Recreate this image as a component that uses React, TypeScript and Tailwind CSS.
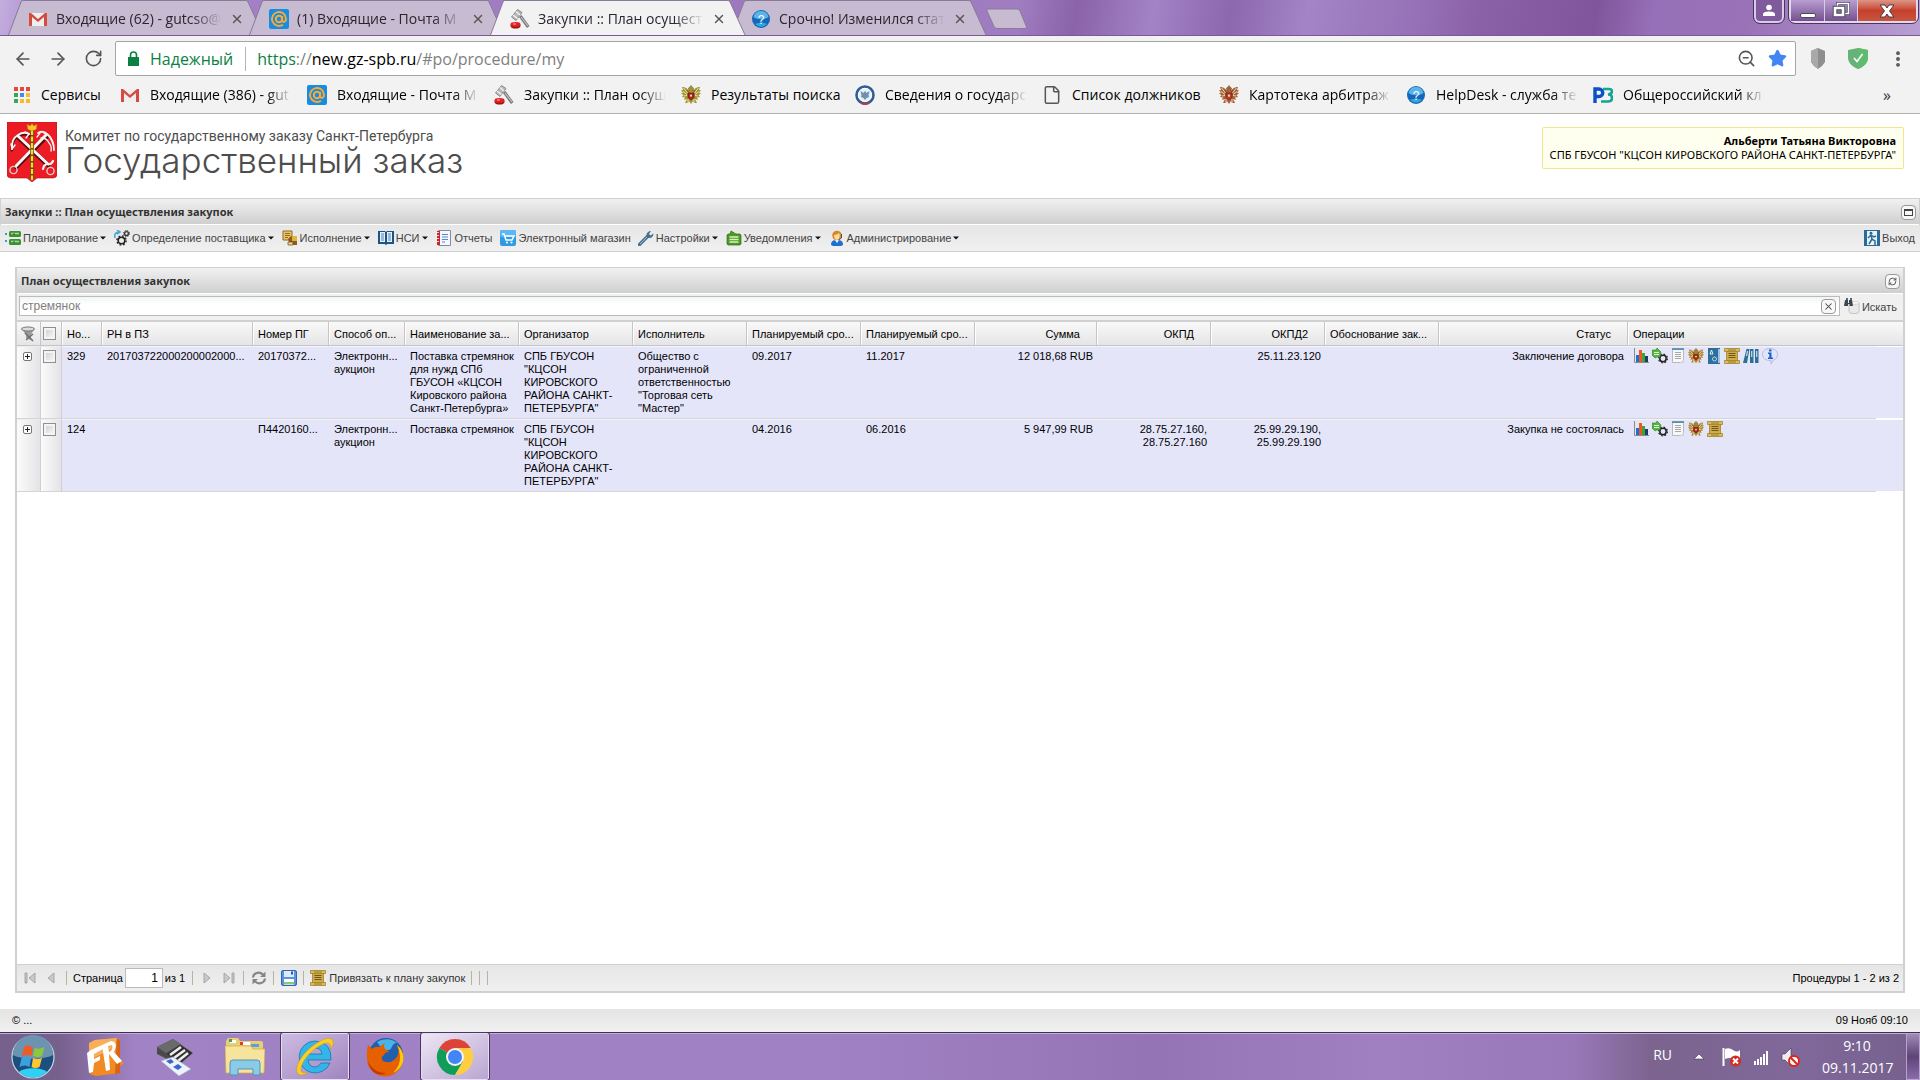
import type { ReactNode } from "react";
import clsx from "clsx";
import {
  ArrowLeft,
  ArrowRight,
  EllipsisVertical,
  File,
  RefreshCw,
  RotateCw,
  Star,
  X,
  ZoomOut,
} from "lucide-react";

const ui = "font-['Open_Sans','Noto_Sans',sans-serif]";
const arial = "font-['Liberation_Sans',Arial,sans-serif]";
const tahoma = "font-['Noto_Sans','Open_Sans',sans-serif]";
const fade = "[mask-image:linear-gradient(to_right,#000_82%,transparent)]";

/* ---------- icons ---------- */

const Svg = ({
  size = 16,
  box = 16,
  narrow = false,
  children,
}: {
  size?: number;
  box?: number;
  narrow?: boolean;
  children: ReactNode;
}) => (
  <svg
    width={narrow ? size - 2 : size}
    height={size}
    viewBox={`0 0 ${narrow ? box - 2 : box} ${box}`}
    className="shrink-0"
    aria-hidden="true"
  >
    {children}
  </svg>
);

const GmailIcon = () => (
  <Svg size={20} box={20}>
    <path d="M2 4h16v13H2z" fill="#eee" />
    <path d="M1 17V4h2l7 6 7-6h2v13h-3V8l-6 5-6-5v9z" fill="#d54b3d" />
  </Svg>
);

const MailRuIcon = () => (
  <Svg size={20} box={20}>
    <rect width="20" height="20" rx="2" fill="#168de2" />
    <circle cx="10" cy="10" r="3.2" fill="none" stroke="#ffa930" strokeWidth="2" />
    <path
      d="M13.2 7v4.2c0 2.6 3.8 2.2 3.8-1.2a7 7 0 1 0-3 5.7"
      fill="none"
      stroke="#ffa930"
      strokeWidth="1.9"
    />
  </Svg>
);

const GavelIcon = () => (
  <Svg size={20} box={20}>
    <path d="M9 8l2.500-2 8 11-2.500 2z" fill="#777" />
    <path d="M11 8l7 9" stroke="#c4c4c4" strokeWidth="1.2" />
    <path d="M1.500 8l6-7.500 4.500 3-6 8z" fill="#b9b9b9" stroke="#777" strokeWidth=".8" />
    <path d="M3 6l4.500 3.500M6 2.500l4 3.500" stroke="#f4f4f4" strokeWidth="1.2" />
    <ellipse cx="5.500" cy="16.800" rx="5" ry="2.800" fill="#a80f0f" />
    <ellipse cx="5.500" cy="15.400" rx="5" ry="2.400" fill="#e02222" />
    <ellipse cx="4.500" cy="15" rx="1.700" ry=".8" fill="#ff9b9b" />
  </Svg>
);

const HelpIcon = () => (
  <Svg size={20} box={20}>
    <circle cx="10" cy="10" r="9" fill="#1667b7" />
    <path d="M2.5 8a7.7 7.7 0 0 1 15 0c-4 3-11 3-15 0z" fill="#59b4ea" />
    <path d="M4 15a8 8 0 0 0 12 0c-4-2-8-2-12 0z" fill="#31a5e0" />
    <text x="10" y="14.6" fontSize="12" fontWeight="400" textAnchor="middle" fill="#fff" fontFamily="Liberation Sans">
      ?
    </text>
  </Svg>
);

const EagleIcon = ({ size = 20, wing = "#a8922f", body = "#b3211f" }) => (
  <Svg size={size} box={20}>
    <path
      d="M9 8C7 4 5 2 1 2l1 3-2 .5 2 2-2 1 2.500 1.500L1 12l3 .5L3 15l3-1-2 4h3l1-2 2 3 2-3 1 2h3l-2-4 3 1-1-2.500 3-.5-1.500-2L20 8.500l-2-1 2-2L18 5l1-3c-4 0-6 2-8 6z"
      fill={wing}
    />
    <path d="M6 5.500l2 .5-.5-3L9 2l1-1.500L11 2l1.500 1-.5 3 2-.5-2.500 3h-3z" fill={wing} stroke="#5c4412" strokeWidth=".5" />
    <path d="M2.500 3l4 5M2 6.500l4 3M3 11l3-.5M17.500 3l-4 5M18 6.500l-4 3M17 11l-3-.5M7 14v4M13 14v4" stroke="#f0e6b8" strokeWidth=".9" />
    <path d="M7 8h6v4.500L10 15l-3-2.500z" fill={body} stroke="#5c1a10" strokeWidth=".6" />
    <circle cx="10" cy="10.700" r="1.100" fill="#f3e4c4" />
  </Svg>
);

const ServiceIcon = () => (
  <Svg size={20} box={20}>
    <circle cx="10" cy="10" r="8.500" fill="#e8edf3" stroke="#2d5f99" strokeWidth="2.600" />
    <circle cx="10" cy="10" r="6.500" fill="none" stroke="#fff" strokeWidth="1" />
    <path d="M10 6l1.500 2 3-2-1 4 .5 2-2.500 1-1.500 2-1.500-2L6 12l.5-2-1-4 3 2z" fill="#6f8fb3" />
    <path d="M6 18c2 1.500 6 1.500 8 0" stroke="#c33" strokeWidth="1.600" fill="none" />
  </Svg>
);

const AppsIcon = () => (
  <Svg size={17} box={17}>
    {["#e8453c", "#e8453c", "#e8453c", "#3aa757", "#4688f1", "#f9bb2d", "#3aa757", "#f9bb2d", "#f9bb2d"].map(
      (c, i) => (
        <rect key={i} x={(i % 3) * 6} y={Math.floor(i / 3) * 6} width="4" height="4" fill={c} />
      )
    )}
  </Svg>
);

const RzIcon = () => (
  <Svg size={20} box={20}>
    <path d="M2 18V4h4a3.500 3.500 0 0 1 0 7.500H3" fill="none" stroke="#0a50c8" strokeWidth="3.400" />
    <path d="M10 4h6q3 0 3 2.500T15 9.500q4 0 4 3.500t-4 3.500H8" fill="none" stroke="#12a594" strokeWidth="2.600" />
  </Svg>
);

const PlanIcon = () => (
  <Svg>
    <path d="M0 3h2v2H0zM0 10h2v2H0zM3 3h1M3 11h1" fill="#2b9fd0" />
    <rect x="4" y="1" width="12" height="6" rx="1.500" fill="#3f8f34" />
    <rect x="4" y="9" width="12" height="6" rx="1.500" fill="#3f8f34" />
    <path d="M6 3.500h8M6 11.500h8" stroke="#a5dc93" strokeWidth="1.600" />
    <path d="M8 4h2M8 12h2" stroke="#2c5e26" />
  </Svg>
);

const GearsIcon = () => (
  <Svg>
    <path d="M1 8C0 4 2 2 5 2M3 0l3 2-3 2" stroke="#4aa7d6" strokeWidth="1.600" fill="none" />
    <circle cx="7.500" cy="10.500" r="3.300" fill="none" stroke="#222" strokeWidth="1.600" />
    <circle cx="7.500" cy="10.500" r="4.600" fill="none" stroke="#222" strokeWidth="1.400" strokeDasharray="1.800 1.810" />
    <circle cx="12.500" cy="3.500" r="1.900" fill="none" stroke="#333" strokeWidth="1.300" />
    <circle cx="12.500" cy="3.500" r="3" fill="none" stroke="#333" strokeDasharray="1.300 1.050" />
  </Svg>
);

const ExecIcon = () => (
  <Svg>
    <path d="M1 1h9v9H1z" fill="#e9c66a" stroke="#8d6a1d" />
    <path d="M3 3.500h5M3 5.500h5M3 7.500h3" stroke="#8d6a1d" />
    <path d="M6 9l3-3 6 2v7H8z" fill="#8e5a26" />
    <path d="M10 6h5v5h-5z" fill="#e2b33d" />
    <path d="M6 12h5v3H6z" fill="#f0d489" stroke="#6b4a13" strokeWidth=".7" />
  </Svg>
);

const BookIcon = () => (
  <Svg>
    <path d="M0 1h7l1 1 1-1h7v13H9l-1 1.500L7 14H0z" fill="#1b5486" />
    <path d="M2 2h5v10H2zM9 2h5v10H9z" fill="#e8f1f9" />
    <path d="M3 4h3M3 6h3M3 8h3M3 10h3M10 4h3M10 6h3M10 8h3M10 10h3" stroke="#4b83b5" />
  </Svg>
);

const ReportIcon = () => (
  <Svg>
    <path d="M2.500.5h12v15h-12z" fill="#f4f7fc" stroke="#7c8ea5" />
    <path d="M1 1h3v14H1z" fill="#c9252b" />
    <path d="M0 2.500h3M0 5.500h3M0 8.500h3M0 11.500h3" stroke="#fff" strokeWidth=".8" />
    <path d="M6 4.500h6M6 7h6M6 9.500h6M6 12h3" stroke="#5d86c4" />
  </Svg>
);

const CartIcon = () => (
  <Svg>
    <rect width="16" height="16" rx="2" fill="#2f9be4" />
    <rect width="16" height="7" rx="2" fill="#5cb8f2" />
    <path d="M2 4h2l2 6h6l2-4H5" fill="none" stroke="#fff" strokeWidth="1.500" />
    <circle cx="7" cy="12.500" r="1.100" fill="#fff" />
    <circle cx="11.500" cy="12.500" r="1.100" fill="#fff" />
  </Svg>
);

const WrenchIcon = () => (
  <Svg>
    <path d="M1.500 14.500L10 6" stroke="#47708f" strokeWidth="3.200" strokeLinecap="round" />
    <path d="M2 14L9 7" stroke="#9dbdd4" strokeWidth="1" />
    <path d="M8.500 5.500c0-3 2-4.500 4.500-4.500L11 4l1.500 1.500 3-2c0 3-2 5-5 4.500z" fill="#47708f" />
  </Svg>
);

const NoticeIcon = () => (
  <Svg>
    <path d="M4 4l1-3 5 3h4l1 1v9l-1 1H2l-1-1V5l1-1z" fill="#4d9b22" stroke="#2f6b12" strokeWidth=".7" />
    <path d="M3.500 7h9M3.500 9.500h9M3.500 12h9" stroke="#d9f2c4" strokeWidth="1.300" />
  </Svg>
);

const AdminIcon = () => (
  <Svg>
    <path d="M2 15c0-4 2-5 6-5s6 1 6 5l-2 1H4z" fill="#1f6fd0" />
    <path d="M6 10l2 3 2-3z" fill="#fff" />
    <circle cx="8" cy="5.500" r="4.800" fill="#d18a25" />
    <path d="M5 5c2 0 4-1 5-2 1 1 1.500 6-2 7-2 0-3-3-3-5z" fill="#fbd9a9" />
    <path d="M12.500 4v4l-3 2" stroke="#555" fill="none" />
  </Svg>
);

const ExitIcon = () => (
  <Svg>
    <path d="M0 0h16v16H0z" fill="#2b6a94" />
    <path d="M3 1h10v14H3z" fill="#e8f1f7" />
    <circle cx="7" cy="3.200" r="1.400" fill="#2b6a94" />
    <path d="M7 5l1 4 3 2v4M8 9l-3 5M4 8l3-3 3 2 2-1" stroke="#2b6a94" strokeWidth="1.500" fill="none" />
  </Svg>
);

const FilterIcon = () => (
  <Svg>
    <path d="M1.500 3h13L11 8.500V14l-3-1-2-1V8.500z" fill="#9a9a9a" />
    <ellipse cx="8" cy="3" rx="6.500" ry="2" fill="#dcdcdc" stroke="#777" />
    <path d="M5 7l8 8M13 8l-7 6" stroke="#707070" strokeWidth="1.600" />
  </Svg>
);

const ChartIcon = () => (
  <Svg>
    <path d="M1.500 0v14.500H16" stroke="#8a8a8a" fill="none" />
    <path d="M3 7h3v7H3z" fill="#1672d8" />
    <path d="M6 2h3v12H6z" fill="#f0561d" />
    <path d="M9 5h3v9H9z" fill="#3da33a" />
    <path d="M12 8h3v6h-3z" fill="#1d3d66" />
  </Svg>
);

const ProcessIcon = () => (
  <Svg>
    <circle cx="11" cy="10.500" r="3.200" fill="none" stroke="#222" strokeWidth="1.500" />
    <circle cx="11" cy="10.500" r="4.400" fill="none" stroke="#222" strokeWidth="1.200" strokeDasharray="1.700 1.755" />
    <path d="M0 2l4 0 1-2 4 4-1 5-3 0-2 1-3-3z" fill="#56b53f" stroke="#2f7d22" strokeWidth=".6" />
    <path d="M2 4.500h5M2 6.500h5" stroke="#dff5d8" />
  </Svg>
);

const PageIcon = () => (
  <Svg narrow>
    <path d="M1.500 1.500h11v13h-11z" fill="#f7f7f7" stroke="#b9b9b9" />
    <path d="M1 1h12" stroke="#3f7fa8" strokeWidth="1.500" />
    <path d="M4 4.500h6M4 6.500h6M4 8.500h6M4 10.500h6" stroke="#a9a9a9" />
    <path d="M9 15l4-4v4z" fill="#d5d5d5" />
  </Svg>
);

const LawIcon = () => (
  <Svg narrow>
    <path d="M1 0h12v16H1z" fill="#2d6e9c" />
    <path d="M11 1h2v14h-2z" fill="#9cc3de" />
    <path d="M3 6l1.500-4L6 6z" fill="none" stroke="#e1eef7" />
    <circle cx="7.500" cy="11" r="2" fill="none" stroke="#b5d4e8" />
  </Svg>
);

const ScrollIcon = () => (
  <Svg>
    <path d="M2.500 2h11v12h-11z" fill="#d0ac48" stroke="#8a6914" strokeWidth=".6" />
    <path d="M.5.500h15v3H.5zM.5 12.500h15v3H.5z" fill="#dcbc58" stroke="#9a7820" strokeWidth=".7" />
    <path d="M4.500 5.500h7M4.500 7.500h7M4.500 9.500h7" stroke="#6e5818" />
    <path d="M4 2h8M4 14h8" stroke="#87691d" strokeWidth=".8" />
  </Svg>
);

const BindersIcon = () => (
  <Svg>
    <path d="M3.500 1h3L4 15H0z" fill="#2f6f96" />
    <path d="M7 1h3.500v14H7zM12 1h3.500v14H12z" fill="#2f6f96" />
    <path d="M4.500 3l-1 5M8.700 3v6M13.700 3v6" stroke="#c7e0ef" strokeWidth="1.200" />
  </Svg>
);

const InfoIcon = () => (
  <Svg>
    <path d="M8 .5c4.500 0 7.500 2.500 7.500 6 0 3-1.500 4.500-4 5.500L9 16v-3.500C4 13 .5 10 .5 6.500c0-3.500 3-6 7.500-6z" fill="#dfe5fb" stroke="#a9b2d8" strokeWidth=".8" />
    <path d="M7 1.500h2.500v2H7zM6 4.500h3.500v5H11V11H6V9.500h1.300V6H6z" fill="#1c5fd1" />
  </Svg>
);

const SearchDbIcon = () => (
  <Svg>
    <path d="M5 5h10v9c0 2-10 2-10 0z" fill="#e9e9e9" stroke="#c4c4c4" />
    <ellipse cx="10" cy="5" rx="5" ry="1.500" fill="#fafafa" stroke="#c4c4c4" strokeWidth=".6" />
    <path d="M1 2h3v3h1V2h3l1 6H5.500V6H4v2H0z" fill="#3c4650" />
    <path d="M2 0h2v2H2zM6 0h2v2H6z" fill="#59646e" />
  </Svg>
);

const SaveIcon = () => (
  <Svg>
    <rect x=".5" y=".5" width="15" height="15" rx="1.500" fill="#5b93df" stroke="#3465b0" />
    <path d="M3 1h10v6H3z" fill="#dceafb" />
    <path d="M10 1.500h2v3h-2z" fill="#2a58a5" />
    <path d="M3 9h10v6H3z" fill="#fff" />
    <path d="M3 12h10v2.500H3z" fill="#8bc97a" />
  </Svg>
);

const RefreshIcon = () => (
  <Svg>
    <path
      d="M2 7.500C2.500 3 8 1 12 4.500M14 8.500C13.500 13 8 15 4 11.500"
      fill="none"
      stroke="#858585"
      strokeWidth="2.200"
    />
    <path d="M14.500 1.500V7H9zM1.500 14.500V9H7z" fill="#858585" />
  </Svg>
);

const Emblem = () => (
  <svg width="50" height="60" viewBox="0 0 50 60" className="shrink-0" role="img" aria-label="Герб">
    <path d="M0 0h50v52q0 4-4 4H30l-5 4-5-4H4q-4 0-4-4z" fill="#ed1c24" stroke="#a5161b" strokeWidth=".6" />
    <g fill="none" stroke="#5a0d10" strokeLinecap="round">
      <path d="M9 45L40 14M41 43L11 15" strokeWidth="4.600" />
      <path d="M5 28q-1-10 6-14 7-4 12 0" strokeWidth="3" />
    </g>
    <g fill="none" stroke="#f5f5f5" strokeLinecap="round">
      <path d="M9 44L39 13M41 42L11 14" strokeWidth="3" />
      <path d="M5 27q-1-10 6-14 6-4 11-1" strokeWidth="2" />
      <path d="M5 27l-1-5M5 27l3-4M22 12l-4-2M22 12l-3 4" strokeWidth="1.400" />
      <path d="M31 11q5-3 9 1 7 6 7 16" strokeWidth="1.800" />
      <path d="M34 16q6 0 8 5 3 3 2 8M33 11l-3 4M37 11q6 1 8 8" strokeWidth="1.300" />
      <path d="M37 44q3-3 4-2 3 1 5-3M37 44l-1 3" strokeWidth="2.200" />
    </g>
    <circle cx="6.500" cy="48" r="3.600" fill="none" stroke="#e5c9c9" strokeWidth="1.400" />
    <circle cx="43.500" cy="49" r="3.600" fill="none" stroke="#e5c9c9" strokeWidth="1.400" />
    <path d="M25 8v50" stroke="#6b4a08" strokeWidth="3.600" />
    <path d="M25 8v50" stroke="#f8d92f" strokeWidth="2.200" strokeDasharray="5 1.500" />
    <path d="M20 2l3 2 2-2.500L27 4l3-2-.5 5q-4.500 3.500-9 0z" fill="#f3c72b" stroke="#a1700c" strokeWidth=".5" />
  </svg>
);

const Caret = () => (
  <svg width="6" height="4" viewBox="0 0 6 4" aria-hidden="true">
    <path d="M0 .5h6L3 3.500z" fill="#111" />
  </svg>
);

/* ---------- browser window ---------- */

const Tab = ({ tab }: { tab: (typeof tabs)[number] }) => (
  <div className={clsx("relative -mr-[15px] h-[35px] w-64 shrink-0", tab.active && "z-10")}>
    <svg
      className="absolute inset-0 h-full w-full"
      viewBox="0 0 256 35"
      preserveAspectRatio="none"
      aria-hidden="true"
    >
      <path
        d="M.5 35L13 2q.5-1.500 2-1.500h223q1.500 0 2 1.500l15 33"
        fill={tab.active ? "#f2f2f2" : "#c6bbd0"}
        stroke="#8a7a99"
      />
    </svg>
    <div className="relative flex h-full items-center px-5 pt-0.5">
      {tab.icon}
      <a href="#tab" className={clsx("ml-2 flex-1 whitespace-nowrap text-sm text-[#2b2430]", fade)}>
        {tab.title}
      </a>
      <button type="button" aria-label="Закрыть вкладку" className="ml-2 text-[#555]">
        <X size={14} strokeWidth={2.4} />
      </button>
    </div>
  </div>
);

const WindowButtons = () => (
  <div className="ml-auto flex items-start pr-0.5">
    <button
      type="button"
      aria-label="Профиль"
      className="mr-[5px] flex h-[23px] w-[30px] items-center justify-center rounded-b-md border-2 border-t-0 border-[#d9cbe8] bg-[#7f5a9c] outline outline-[#4c3560]"
    >
      <svg width="12" height="13" viewBox="0 0 12 13" aria-hidden="true">
        <circle cx="6" cy="3.500" r="2.800" fill="#fff" />
        <path d="M0 12V9.500q1-2 6-2t6 2V12z" fill="#fff" />
      </svg>
    </button>
    <div className="flex h-[23px] rounded-b-md border-2 border-t-0 border-[#e2d8ec] outline outline-[#4c3560]">
      <button
        type="button"
        aria-label="Свернуть"
        className="flex w-[34px] items-end justify-center border-r border-[#d8cce4] bg-linear-to-b from-[#b99ed1] to-[#765090] pb-[3px]"
      >
        <span className="h-[5px] w-4 rounded-xs border border-[#4a4a5a] bg-white" />
      </button>
      <button
        type="button"
        aria-label="Восстановить"
        className="flex w-[33px] items-center justify-center border-r border-[#d8cce4] bg-linear-to-b from-[#b99ed1] to-[#765090]"
      >
        <svg width="18" height="17" viewBox="0 0 18 17" aria-hidden="true">
          <path d="M5.500 1.500h11v10h-11z" fill="none" stroke="#4a4a5a" strokeWidth="3" />
          <path d="M5.500 1.500h11v10h-11z" fill="none" stroke="#fff" strokeWidth="1.600" />
          <path d="M3 6h8v7H3z" fill="#8b6aa5" stroke="#4a4a5a" strokeWidth="4.500" />
          <path d="M3 6h8v7H3z" fill="none" stroke="#fff" strokeWidth="2.600" />
        </svg>
      </button>
      <button
        type="button"
        aria-label="Закрыть"
        className="flex w-[58px] items-center justify-center bg-linear-to-b from-[#dd9485] via-[#c5402b] to-[#c7553f]"
      >
        <svg width="16" height="14" viewBox="0 0 16 14" aria-hidden="true">
          <path d="M1 1h5l2 3 2-3h5l-4.500 6 4.500 6h-5l-2-3-2 3H1l4.500-6z" fill="#fff" stroke="#4a3a44" />
        </svg>
      </button>
    </div>
  </div>
);

const TabStrip = () => (
  <div className="flex h-9 items-start overflow-hidden border-b border-[#7a5a94] bg-[linear-gradient(100deg,#c3aede_0%,#a583c8_3%,#9d78be_40%,#a07cc0_53%,#8a63a8_56%,#a482c6_60%,#8c68ae_64%,#a483c6_68%,#9570b6_74%,#8a60a6_77%,#80559b_83%,#9670b8_86%,#9a72b8_91%,#b79fd2_100%)] pl-2">
    <div className="flex">
      {tabs.map((tab) => (
        <Tab key={tab.title} tab={tab} />
      ))}
    </div>
    <button type="button" aria-label="Новая вкладка" className="ml-3.5 mt-2">
      <svg width="42" height="22" viewBox="0 0 42 22" aria-hidden="true">
        <path d="M2 1h29q2 0 3 2l6.500 16q.5 1.500-1.500 1.500H11q-2 0-3-2L1 3q-.5-2 1-2z" fill="#c6bbd0" stroke="#8a7a99" />
      </svg>
    </button>
    <WindowButtons />
  </div>
);

const AddressBar = () => (
  <div className="flex h-[45px] items-center gap-3 bg-[#f2f2f2] pl-[13px] pr-3 text-[#555]">
    <button type="button" aria-label="Назад">
      <ArrowLeft size={20} />
    </button>
    <button type="button" aria-label="Вперед" className="ml-[3px]">
      <ArrowRight size={20} />
    </button>
    <button type="button" aria-label="Обновить" className="ml-1">
      <RotateCw size={19} />
    </button>
    <div className="flex h-[35px] flex-1 items-center rounded-xs border border-[#a5a5a5] bg-white px-3">
      <svg width="11" height="15" viewBox="0 0 11 15" aria-hidden="true">
        <path d="M0 6h11v9H0z" fill="#0b8043" />
        <path d="M2.500 7V4a3 3 0 0 1 6 0v3" fill="none" stroke="#0b8043" strokeWidth="1.600" />
      </svg>
      <span className="ml-[11px] text-base text-[#0b8043]">Надежный</span>
      <span className="ml-3 mr-[11px] h-6 w-px bg-[#b5b5b5]" />
      <div role="textbox" aria-label="Адрес" tabIndex={0} className="flex-1 text-base text-[#808080]">
        <span className="text-[#0b8043]">https</span>://<span className="text-black">new.gz-spb.ru</span>
        /#po/procedure/my
      </div>
      <button type="button" aria-label="Масштаб">
        <ZoomOut size={19} />
      </button>
      <button type="button" aria-label="Закладка" className="-mr-1 ml-3">
        <Star size={19} className="fill-[#4285f4] text-[#4285f4]" />
      </button>
    </div>
    <button type="button" aria-label="Расширение">
      <svg width="20" height="21" viewBox="0 0 20 21" aria-hidden="true">
        <path d="M10 0l7 3v11l-3 4-4 3-4-3-3-4V3z" fill="#8e8e8e" />
        <path d="M10 0v21l-4-3-3-4V3z" fill="#a9a9a9" />
      </svg>
    </button>
    <button type="button" aria-label="Защита" className="ml-2">
      <svg width="20" height="21" viewBox="0 0 20 21" aria-hidden="true">
        <path d="M10 0l10 2v8c0 5-5 9-10 11C5 19 0 15 0 10V2z" fill="#67b279" />
        <path d="M10 0l10 2v8c0 5-5 9-10 11z" fill="#5fbc6e" />
        <path d="M6 10l3 3.500L14.500 6" fill="none" stroke="#fff" strokeWidth="1.600" />
      </svg>
    </button>
    <button type="button" aria-label="Меню" className="ml-2">
      <EllipsisVertical size={20} strokeWidth={2.6} />
    </button>
  </div>
);

const Bookmarks = () => (
  <nav className="flex h-[33px] items-center gap-[15px] border-b border-[#b0b0b0] bg-[#f2f2f2] pb-1 pl-3.5 text-sm text-black">
    <a href="#apps" className="mr-[3px] flex items-center gap-2.5">
      <AppsIcon />
      <span className="w-[61px]">Сервисы</span>
    </a>
    {bookmarks.map((b, i) => (
      <a key={i} href="#bookmark" className="flex items-center gap-2.5">
        {b.icon}
        <span className={clsx("whitespace-nowrap", b.width, b.width === "w-[142px]" && fade)}>
          {b.label}
        </span>
      </a>
    ))}
    <button type="button" aria-label="Другие закладки" className="ml-auto mr-[29px] text-base text-[#333]">
      »
    </button>
  </nav>
);

/* ---------- site ---------- */

const SiteHeader = () => (
  <header className="flex h-[84px] items-start justify-between bg-white pl-[7px] pr-4 pt-2">
    <div className="flex gap-2">
      <Emblem />
      <div className="text-[#4d4d4d]">
        <p className="pt-1 font-['Roboto','Noto_Sans',sans-serif] text-sm leading-5">
          Комитет по государственному заказу Санкт-Петербурга
        </p>
        <h1 className="font-['Inter','Open_Sans',sans-serif] text-[35px] font-light leading-7">
          Государственный заказ
        </h1>
      </div>
    </div>
    <div
      className={clsx(
        "mt-[5px] rounded-xs border border-[#f0e68c] bg-[#fffff0] px-[7px] py-1.5 text-right text-[11px] leading-[14px] text-black",
        tahoma
      )}
    >
      <p className="font-bold">Альберти Татьяна Викторовна</p>
      <p>СПБ ГБУСОН "КЦСОН КИРОВСКОГО РАЙОНА САНКТ-ПЕТЕРБУРГА"</p>
    </div>
  </header>
);

const TitleBar = ({ title, children }: { title: string; children: ReactNode }) => (
  <div className="flex h-[27px] items-center justify-between border-y border-t-[#d0d0d0] border-b-white bg-linear-to-b from-[#f1f1f1] to-[#cfcfcf] pl-1 pr-[3px] pt-0.5">
    <h2 className={clsx("text-[11px] font-bold text-[#333]", tahoma)}>{title}</h2>
    <button
      type="button"
      aria-label="Действие"
      className="flex size-[15px] items-center justify-center rounded-sm border border-[#999] bg-[#f8f8f8] text-[#555]"
    >
      {children}
    </button>
  </div>
);

const MainMenu = () => (
  <nav className="flex h-[27px] items-center border-b border-[#d0d0d0] bg-linear-to-b from-[#e6e6e6] to-[#f0f0f0] px-[5px] text-[11px] text-[#444]">
    {menu.map((m) => (
      <button
        key={m.label}
        type="button"
        className={clsx("flex items-center", m.plain ? "mr-[7px] gap-[3px]" : "mr-2 gap-0.5")}
      >
        {m.icon}
        <span>{m.label}</span>
        {!m.plain && <Caret />}
      </button>
    ))}
    <button type="button" className="ml-auto flex items-center gap-0.5">
      <ExitIcon />
      Выход
    </button>
  </nav>
);

const SearchRow = () => (
  <div className="flex h-7 items-start border-b-2 border-[#d0d0d0] bg-[#f0f0f0] pl-0.5 pr-1.5 pt-0.5 text-[#444]">
    <div className="flex h-5 flex-1 items-center border border-[#bbb] bg-linear-to-b from-[#f1f5f4] to-white to-40% px-0.5">
      <input
        type="text"
        aria-label="Поиск"
        defaultValue="стремянок"
        className="flex-1 bg-transparent text-xs text-[#808080] outline-none"
      />
      <button
        type="button"
        aria-label="Очистить"
        className="mr-px flex size-[15px] items-center justify-center rounded-sm border border-[#999] bg-[#f8f8f8]"
      >
        <X size={11} strokeWidth={2.2} />
      </button>
    </div>
    <button type="button" className="ml-1 flex h-5 items-center gap-0.5 text-[11px]">
      <SearchDbIcon />
      <span className="pt-0.5">Искать</span>
    </button>
  </div>
);

const Tick = ({ label }: { label: string }) => (
  <input
    type="checkbox"
    aria-label={label}
    className="size-[13px] appearance-none border border-[#8e8f8f] bg-linear-to-br from-[#c8c8d0] to-white align-top shadow-[inset_0_0_0_2px_#f4f4f4]"
  />
);

const gutter = "border-y border-t-[#ededed] border-b-[#d5d5d5] bg-linear-to-r from-[#fbfbfb] to-[#e4e4e8]";

const Grid = () => (
  <table className="w-full table-fixed border-separate border-spacing-0 text-[11px] leading-[13px] text-black">
    <colgroup>
      <col className="w-[23px]" />
      <col className="w-[21px]" />
      {columns.map((c, i) => (
        <col key={i} className={c.width} />
      ))}
      <col />
      <col className="w-[27px]" />
    </colgroup>
    <thead>
      <tr className="h-6 bg-linear-to-b from-[#f9f9f9] to-[#e4e4e6]">
        <th className="border-b border-[#c5c5c5] pl-[3px]">
          <FilterIcon />
        </th>
        <th className="border-b border-l border-[#c5c5c5] pl-0.5 text-left">
          <Tick label="Выбрать все" />
        </th>
        {columns.map((c, i) => (
          <th
            key={i}
            className={clsx(
              "whitespace-nowrap border-b border-l border-[#c5c5c5] pt-0.5 font-normal shadow-[inset_1px_0_#fff]",
              c.right ? "pr-4 text-right" : "pl-[5px] text-left"
            )}
          >
            {c.label}
          </th>
        ))}
        <th
          colSpan={2}
          className="border-b border-l border-[#c5c5c5] pl-[5px] pt-0.5 text-left font-normal shadow-[inset_1px_0_#fff]"
        >
          Операции
        </th>
      </tr>
    </thead>
    <tbody>
      {rows.map((row) => (
        <tr key={row.cells[0]} className="bg-[#e5e5fa] align-top">
          <td className={clsx("pl-1.5 pt-[5px]", gutter)}>
            <button
              type="button"
              aria-label="Развернуть"
              className="flex size-[9px] items-center justify-center rounded-xs border border-[#777] bg-white"
            >
              <svg width="5" height="5" viewBox="0 0 5 5" aria-hidden="true">
                <path d="M0 2.500h5M2.500 0v5" stroke="#222" />
              </svg>
            </button>
          </td>
          <td className={clsx("border-l border-l-[#d0d0d0] pl-0.5 pt-[3px]", gutter)}>
            <Tick label={`Выбрать ${row.cells[0]}`} />
          </td>
          {row.cells.map((cell, i) => (
            <td
              key={i}
              className={clsx(
                "h-[73px] border-y border-l border-t-[#f4f4fc] border-b-[#d5d5d5] py-[3px]",
                i === 0 ? "border-l-[#d0d0d0]" : "border-l-transparent",
                columns[i].right ? "pr-[3px] text-right" : "pl-[5px]"
              )}
            >
              {cell}
            </td>
          ))}
          <td className="border-y border-t-[#f4f4fc] border-b-[#d5d5d5] pl-1.5 pt-px">
            <div className="flex gap-[3px]">
              {row.ops.map((Icon, i) => (
                <button key={i} type="button" aria-label={`Операция ${i + 1}`}>
                  <Icon />
                </button>
              ))}
            </div>
          </td>
          <td className="border-y border-white" />
        </tr>
      ))}
    </tbody>
  </table>
);

const Sep = () => <span className="h-3.5 w-px bg-[#b8b49c]" />;

const pageButton = (label: string, d: string) => (
  <button type="button" aria-label={label} disabled>
    <svg width="12" height="12" viewBox="0 0 12 12" aria-hidden="true">
      <path d={d} fill="#c9c9c9" stroke="#999" strokeWidth=".8" />
    </svg>
  </button>
);

const Pager = () => (
  <div className="flex h-[27px] items-center border-t border-[#d0d0d0] bg-linear-to-b from-[#e6e6e6] to-[#f0f0f0] pl-[7px] pr-1 text-[11px] text-black">
    {pageButton("Первая страница", "M1 1h2v10H1zM11 1v10L5 6z")}
    <span className="w-2.5" />
    {pageButton("Предыдущая страница", "M8 1v10L2 6z")}
    <span className="w-2" />
    <Sep />
    <label htmlFor="page" className="ml-1.5 mr-0.5">
      Страница
    </label>
    <input
      id="page"
      type="text"
      defaultValue="1"
      className="h-5 w-[38px] border border-[#bbb] bg-white pr-1 text-right text-xs"
    />
    <span className="ml-0.5 mr-[7px]">из 1</span>
    <Sep />
    <span className="w-2" />
    {pageButton("Следующая страница", "M3 1v10l6-5z")}
    <span className="w-2.5" />
    {pageButton("Последняя страница", "M1 1v10l6-5zM9 1h2v10H9z")}
    <span className="w-2" />
    <Sep />
    <button type="button" aria-label="Обновить" className="ml-[7px] mr-1.5">
      <RefreshIcon />
    </button>
    <Sep />
    <button type="button" aria-label="Сохранить" className="ml-[7px] mr-1.5">
      <SaveIcon />
    </button>
    <Sep />
    <button type="button" className="mx-1.5 flex items-center gap-[3px] text-[#333]">
      <ScrollIcon />
      Привязать к плану закупок
    </button>
    <div className="flex gap-[7px]">
      <Sep />
      <Sep />
      <Sep />
    </div>
    <span className="ml-auto">Процедуры 1 - 2 из 2</span>
  </div>
);

/* ---------- taskbar ---------- */

const StartIcon = () => (
  <svg width="44" height="44" viewBox="0 0 44 44" aria-hidden="true">
    <circle cx="22" cy="22" r="21" fill="#1c4f7c" stroke="#c6d8e8" strokeWidth="1.200" />
    <path d="M2 20a20 20 0 0 1 40 0c-10 5-30 5-40 0z" fill="#6c94b0" />
    <path d="M8 37a20 20 0 0 0 28 0c-5-5-23-5-28 0z" fill="#2fd0f4" />
    <path d="M13 12q4-3 9 0l-1.500 9q-5-2-9.500 0z" fill="#ee5a2a" />
    <path d="M23.500 13q5 2 10-1L31 21q-4 2-9 0z" fill="#8dc63f" />
    <path d="M10.500 23q5-2 9.500 0l-1.500 9q-5-3-10 0z" fill="#3aa0e0" />
    <path d="M22 23q4 2 9 0l-2.500 9q-4 2-8 0z" fill="#fdc82f" />
  </svg>
);

const FineReaderIcon = () => (
  <svg width="40" height="40" viewBox="0 0 40 40" aria-hidden="true">
    <path d="M4 6l6-3 22-2 3 3v19l4 3-4 3v7l-24 3-6-2z" fill="#f28a24" />
    <path d="M32 1l3 3v32l-5 1z" fill="#d9640f" />
    <path d="M10 3l22-2-3 10-25 12V6z" fill="#f9ae5a" />
    <path d="M2 16l4-3 11-5 1 4-9 5v5l6-3v4l-6 3-1 9-4 1zM17 8l9-4q8 1 3 11l8 9-5 3-8-10 1 16-4 1zM23 9l1 6q5-3 3-7z" fill="#fff" />
  </svg>
);

const ScannerIcon = () => (
  <svg width="40" height="40" viewBox="0 0 40 40" aria-hidden="true">
    <path d="M2 10L18 2l20 14-14 12L2 17z" fill="#4a4a4a" />
    <path d="M2 10L18 2l8 5-15 9z" fill="#6a6a6a" />
    <path d="M12 17l13-9 12 8-13 11z" fill="#2e2e2e" />
    <path d="M15 18l11-8M19 21l11-8M23 24l10-8" stroke="#eee" strokeWidth="2.600" />
    <path d="M6 24l12-4 18 12-12 7z" fill="#eef2fb" stroke="#9fb0cc" strokeWidth=".7" />
    <path d="M11 24l5-2 3 3-4 2zM18 30l5-3 4 3-4 3z" fill="#3a67c9" />
  </svg>
);

const FolderIcon = () => (
  <svg width="40" height="40" viewBox="0 0 40 40" aria-hidden="true">
    <path d="M1 4l2-3h10l2 3h21q2 0 2 2v28H1z" fill="#e8cf76" />
    <path d="M5 3h6v3H5zM16 5h9v3h-9z" fill="#fff" />
    <path d="M4 2h3v3H4z" fill="#3aa757" />
    <path d="M15 5h3v3h-3z" fill="#d9402c" />
    <path d="M26 7h8v3h-8z" fill="#5a9ee0" />
    <path d="M0 9h26l2 3h12l-1 24H1z" fill="#f6e39c" stroke="#cfae4b" strokeWidth=".8" />
    <path d="M5 38V26q0-3 3-3h24q3 0 3 3v12h-7v-6H13v6z" fill="#8ccbe8" stroke="#4f93b8" />
  </svg>
);

const IeIcon = () => (
  <svg width="40" height="40" viewBox="0 0 40 40" aria-hidden="true">
    <path d="M20 4a16 16 0 1 0 15 22h-9q-2 4-6 4-6 0-7-7h23Q37 5 20 4zm-7 13q1-6 7-6t7 6z" fill="#35b4ea" stroke="#1577ae" strokeWidth=".8" />
    <path d="M7 38C-3 38 2 22 15 11 25 3 36-2 38 4q1 3-2 8 0-7-5-6C20 9 5 24 6 34q1 3 7 1-3 3-6 3z" fill="#f9cf27" stroke="#c9940f" strokeWidth=".5" />
  </svg>
);

const FirefoxIcon = () => (
  <svg width="40" height="40" viewBox="0 0 40 40" aria-hidden="true">
    <circle cx="21" cy="18" r="17" fill="#1f5fae" />
    <path d="M12 5a17 17 0 0 1 20 1c-6 0-4 6-8 7-6 0-8-2-12-8z" fill="#4ab4e6" />
    <path d="M3 8q2 1 4 4 3-3 8-2 2-3 5-4-2 3 0 6 3 1 4 3-4 0-5 3-4 2-1 6 6 3 11-1 7-5 3-15 7 5 6 14a18 18 0 0 1-36-1Q1 14 3 8z" fill="#e66000" />
    <path d="M32 8q8 7 6 17-3 8-10 11 8-8 7-17 0-6-3-11z" fill="#ffcb00" />
    <path d="M3 24q5 12 18 12-5 3-11 0-6-4-7-12z" fill="#c13800" />
  </svg>
);

const ChromeIcon = () => (
  <svg width="40" height="40" viewBox="0 0 40 40" aria-hidden="true">
    <path d="M20 20L4.400 11A18 18 0 0 1 35.600 11z" fill="#db4437" />
    <path d="M4.400 11A18 18 0 0 0 20 38l8-13.500L20 20z" fill="#0f9d58" />
    <path d="M35.600 11A18 18 0 0 1 20 38l8-13.500L20 11z" fill="#ffcd40" />
    <circle cx="20" cy="20" r="9" fill="#f4f4f4" />
    <circle cx="20" cy="20" r="7" fill="#4285f4" />
  </svg>
);

const Tray = () => (
  <div className="ml-auto flex h-full items-center text-white">
    <span className="mr-[22px] pb-1 text-sm">RU</span>
    <svg width="110" height="22" viewBox="0 0 110 22" aria-hidden="true">
      <path d="M5 8l5 5H0z" fill="#fff" stroke="#463457" strokeWidth=".6" />
      <path d="M29.500 2v18" stroke="#fff" strokeWidth="2" />
      <path d="M31 3q4-2 8 1t7 0v9q-4 2-7 0t-8 0z" fill="#fff" />
      <circle cx="41.500" cy="15" r="5.500" fill="#d62b20" />
      <path d="M39 12.500l5 5M44 12.500l-5 5" stroke="#fff" strokeWidth="1.800" />
      <path d="M60 15h2v4h-2zM63 13h2v6h-2zM66 11h2v8h-2zM69 8h2v11h-2zM72 5h2v14h-2z" fill="#fff" />
      <path d="M88 8h3l6-6v18l-6-6h-3z" fill="#eee" stroke="#463457" strokeWidth=".6" />
      <circle cx="100" cy="15" r="5" fill="#fff" stroke="#e0241b" strokeWidth="2" />
      <path d="M96.500 11.500l7 7" stroke="#e0241b" strokeWidth="2" />
    </svg>
    <div className="ml-[18px] mr-3.5 w-[70px] text-center text-sm leading-[22px]">
      <p>9:10</p>
      <p className="whitespace-nowrap">09.11.2017</p>
    </div>
    <button
      type="button"
      aria-label="Свернуть все окна"
      className="h-full w-3.5 border border-[#b8a3cc] bg-linear-to-b from-[#a18cb8] via-[#5d4577] to-[#8b6bab]"
    />
  </div>
);

const Taskbar = () => (
  <footer className="flex h-12 items-center border-t border-[#3f2f50] bg-[linear-gradient(to_right,#76608c_0%,#76608c_3%,#a182c4_7%,#9f80c2_45%,#9474b4_60%,#a080c0_72%,#9878b8_82%,#7c648f_86%,#80689a_94%,#74608c_100%)] pl-[11px] shadow-[inset_0_1px_#c3aed8]">
    <button type="button" aria-label="Пуск" className="mr-4">
      <StartIcon />
    </button>
    <div className="flex h-full gap-0.5">
      {apps.map((a) => (
        <button
          key={a.name}
          type="button"
          aria-label={a.name}
          className={clsx(
            "flex h-full w-[68px] items-center justify-center",
            a.open && "rounded-xs border border-[#e7ddf2] bg-linear-to-br outline outline-[#4a3760]",
            a.open && (a.front ? "from-[#eee6f4] to-[#b9a5d2]" : "from-[#cdbbe0] to-[#a085c0]")
          )}
        >
          {a.icon}
        </button>
      ))}
    </div>
    <Tray />
  </footer>
);

const App = () => (
  <div className="flex min-h-screen flex-col bg-white">
    <div className={ui}>
      <TabStrip />
      <AddressBar />
      <Bookmarks />
    </div>
    <main className={clsx("flex flex-1 flex-col", arial)}>
      <SiteHeader />
      <div className="border-x border-[#d0d0d0]">
        <TitleBar title="Закупки :: План осуществления закупок">
          <span className="h-[7px] w-[9px] border border-t-2 border-[#444]" />
        </TitleBar>
      </div>
      <MainMenu />
      <section className="mx-[15px] mb-4 mt-[15px] flex flex-1 flex-col border-x-2 border-b-2 border-[#d0d0d0]">
        <TitleBar title="План осуществления закупок">
          <RefreshCw size={9} strokeWidth={2.6} />
        </TitleBar>
        <SearchRow />
        <div className="flex-1">
          <Grid />
        </div>
        <Pager />
      </section>
      <div className="flex h-[23px] items-center justify-between bg-linear-to-b from-[#e4e4e4] to-[#f0f0f0] px-3 text-[11px] text-black">
        <span>© ...</span>
        <span>09 Нояб 09:10</span>
      </div>
    </main>
    <div className={ui}>
      <Taskbar />
    </div>
  </div>
);

export default App;

const tabs = [
  { title: "Входящие (62) - gutcso@", icon: <GmailIcon />, active: false },
  { title: "(1) Входящие - Почта M", icon: <MailRuIcon />, active: false },
  { title: "Закупки :: План осущест", icon: <GavelIcon />, active: true },
  { title: "Срочно! Изменился стат", icon: <HelpIcon />, active: false },
];

const bookmarks = [
  { label: "Входящие (386) - gut", icon: <GmailIcon />, width: "w-[142px]" },
  { label: "Входящие - Почта M", icon: <MailRuIcon />, width: "w-[142px]" },
  { label: "Закупки :: План осущ", icon: <GavelIcon />, width: "w-[142px]" },
  { label: "Результаты поиска", icon: <EagleIcon wing="#a39433" />, width: "w-[129px]" },
  { label: "Сведения о государс", icon: <ServiceIcon />, width: "w-[142px]" },
  { label: "Список должников", icon: <File size={20} strokeWidth={1.8} className="shrink-0 text-[#555]" />, width: "w-[132px]" },
  { label: "Картотека арбитраж", icon: <EagleIcon wing="#a8603c" body="#c23a2b" />, width: "w-[142px]" },
  { label: "HelpDesk - служба те", icon: <HelpIcon />, width: "w-[142px]" },
  { label: "Общероссийский кл", icon: <RzIcon />, width: "w-[142px]" },
];

const menu = [
  { label: "Планирование", icon: <PlanIcon /> },
  { label: "Определение поставщика", icon: <GearsIcon /> },
  { label: "Исполнение", icon: <ExecIcon /> },
  { label: "НСИ", icon: <BookIcon /> },
  { label: "Отчеты", icon: <ReportIcon />, plain: true },
  { label: "Электронный магазин", icon: <CartIcon />, plain: true },
  { label: "Настройки", icon: <WrenchIcon /> },
  { label: "Уведомления", icon: <NoticeIcon /> },
  { label: "Администрирование", icon: <AdminIcon /> },
];

const columns = [
  { label: "Но...", width: "w-10" },
  { label: "РН в ПЗ", width: "w-[151px]" },
  { label: "Номер ПГ", width: "w-[76px]" },
  { label: "Способ оп...", width: "w-[76px]" },
  { label: "Наименование за...", width: "w-[114px]" },
  { label: "Организатор", width: "w-[114px]" },
  { label: "Исполнитель", width: "w-[114px]" },
  { label: "Планируемый сро...", width: "w-[114px]" },
  { label: "Планируемый сро...", width: "w-[114px]" },
  { label: "Сумма", width: "w-[122px]", right: true },
  { label: "ОКПД", width: "w-[114px]", right: true },
  { label: "ОКПД2", width: "w-[114px]", right: true },
  { label: "Обоснование зак...", width: "w-[114px]" },
  { label: "Статус", width: "w-[189px]", right: true },
];

const SmallEagle = () => <EagleIcon size={16} wing="#a8842f" />;

const rows = [
  {
    cells: [
      "329",
      "201703722000200002000...",
      "20170372...",
      "Электронн... аукцион",
      "Поставка стремянок для нужд СПб ГБУСОН «КЦСОН Кировского района Санкт-Петербурга»",
      'СПБ ГБУСОН "КЦСОН КИРОВСКОГО РАЙОНА САНКТ-ПЕТЕРБУРГА"',
      'Общество с ограниченной ответственностью "Торговая сеть "Мастер"',
      "09.2017",
      "11.2017",
      "12 018,68 RUB",
      "",
      "25.11.23.120",
      "",
      "Заключение договора",
    ],
    ops: [ChartIcon, ProcessIcon, PageIcon, SmallEagle, LawIcon, ScrollIcon, BindersIcon, InfoIcon],
  },
  {
    cells: [
      "124",
      "",
      "П4420160...",
      "Электронн... аукцион",
      "Поставка стремянок",
      'СПБ ГБУСОН "КЦСОН КИРОВСКОГО РАЙОНА САНКТ-ПЕТЕРБУРГА"',
      "",
      "04.2016",
      "06.2016",
      "5 947,99 RUB",
      "28.75.27.160, 28.75.27.160",
      "25.99.29.190, 25.99.29.190",
      "",
      "Закупка не состоялась",
    ],
    ops: [ChartIcon, ProcessIcon, PageIcon, SmallEagle, ScrollIcon],
  },
];

const apps = [
  { name: "FineReader", icon: <FineReaderIcon /> },
  { name: "Сканер", icon: <ScannerIcon /> },
  { name: "Проводник", icon: <FolderIcon /> },
  { name: "Internet Explorer", icon: <IeIcon />, open: true },
  { name: "Firefox", icon: <FirefoxIcon /> },
  { name: "Chrome", icon: <ChromeIcon />, open: true, front: true },
];
